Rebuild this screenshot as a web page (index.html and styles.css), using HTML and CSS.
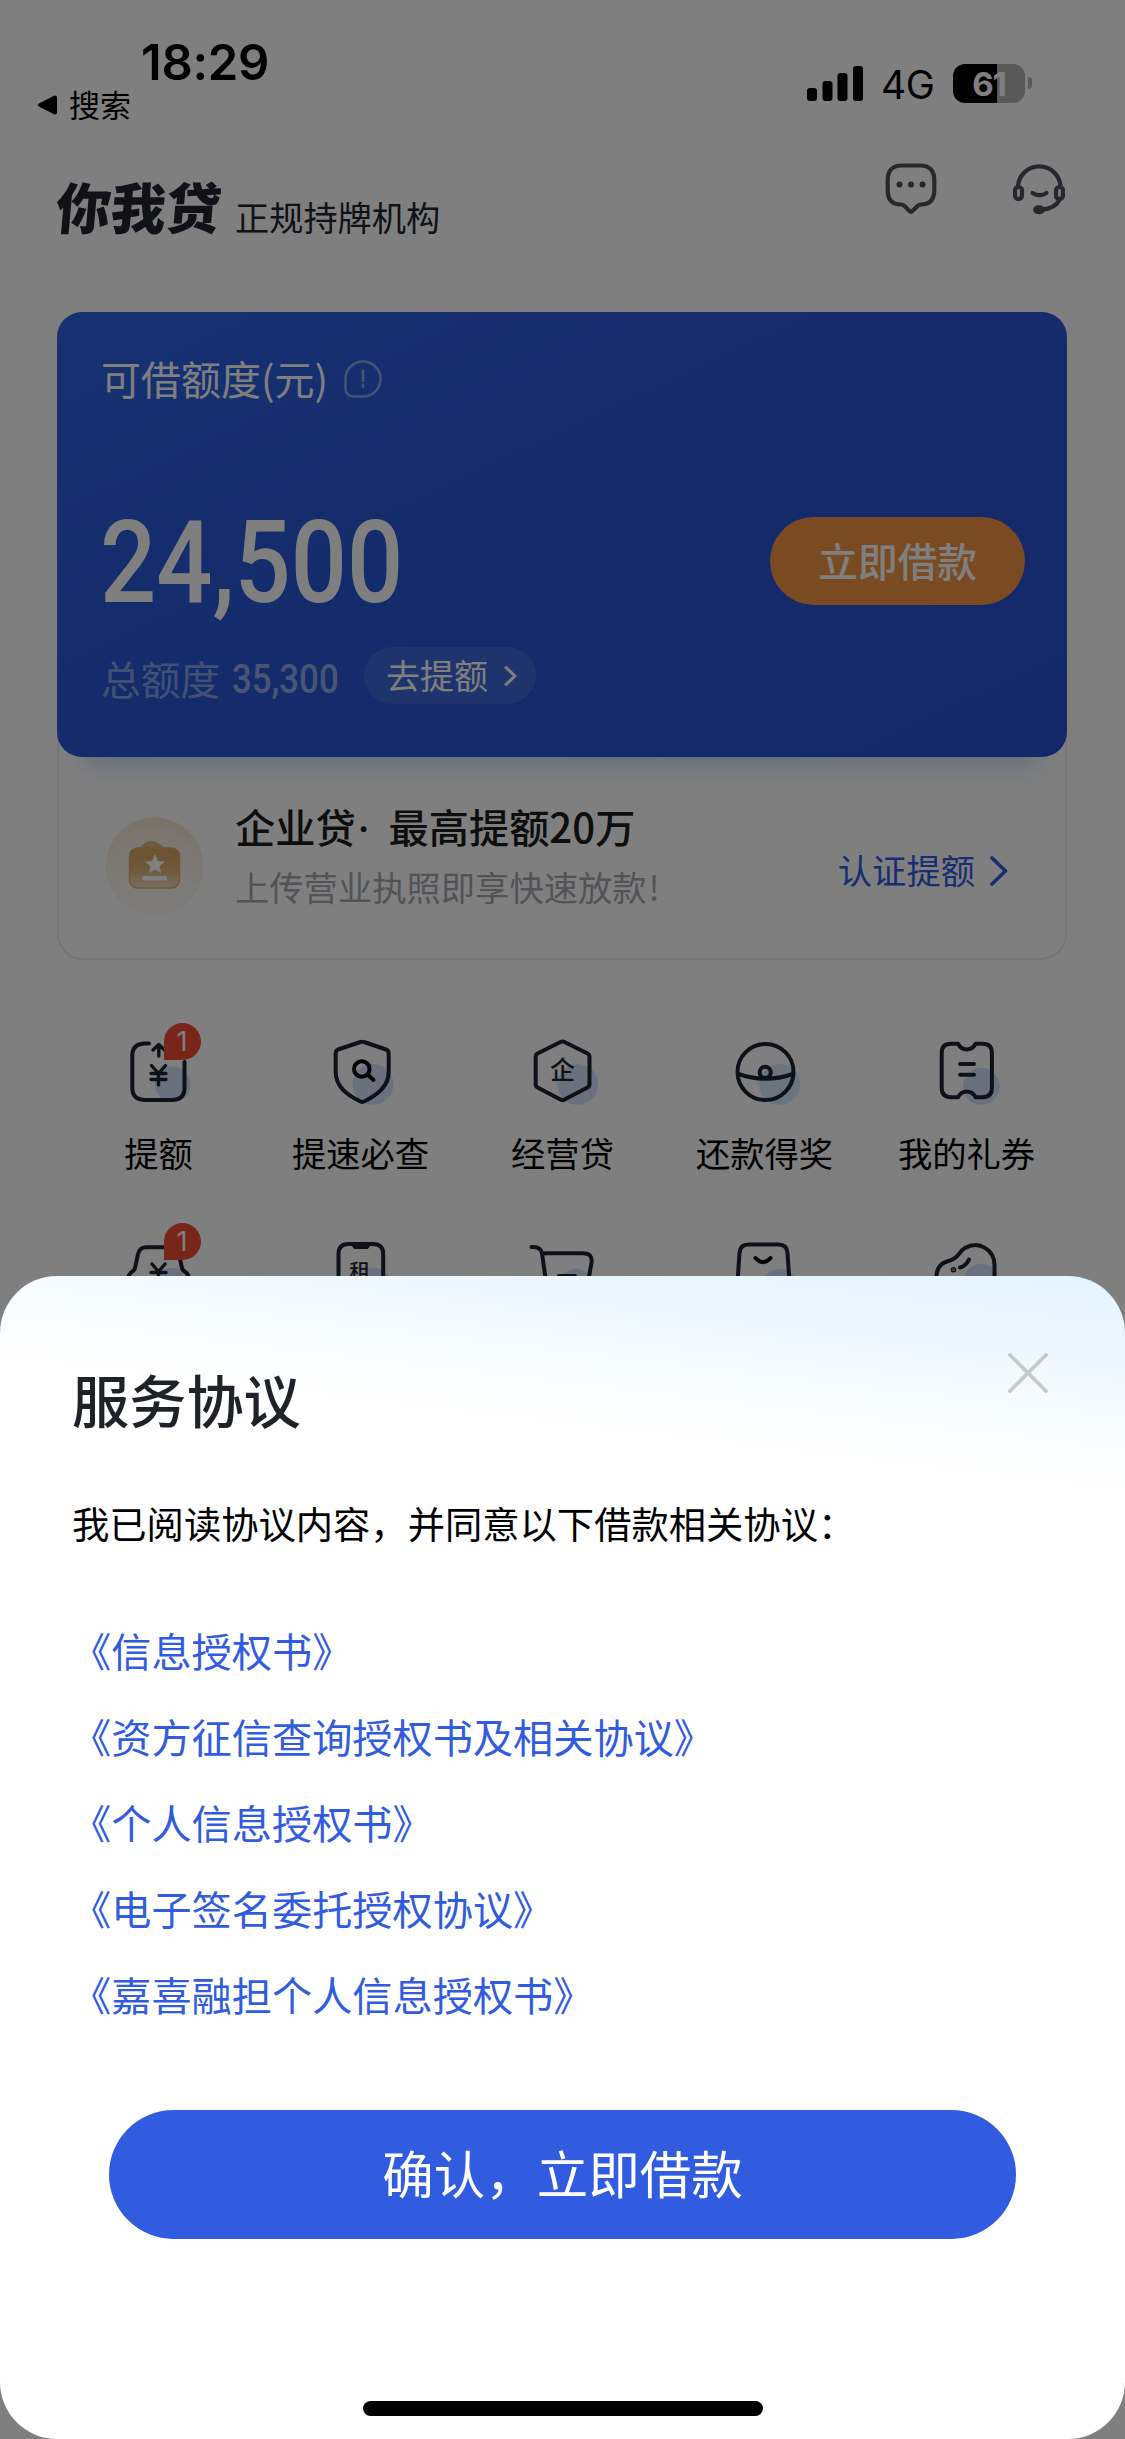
FILE: index.html
```html
<!DOCTYPE html>
<html lang="zh-CN">
<head>
<meta charset="utf-8">
<title>你我贷</title>
<link rel="stylesheet" href="styles.css">
</head>
<body>
<div class="screen">
  <div class="status">
    <div class="status-left">
      <div class="clock">18:29</div>
      <div class="back">
        <svg class="back-arrow" viewBox="0 0 20 20"><path d="M2 8.6 17 .8Q20 0 20 2.500V17.500Q20 20 17 19.200L2 11.400Q-.5 10 2 8.600Z"/></svg>
        <span>搜索</span>
      </div>
    </div>
    <div class="status-right">
      <svg class="signal" viewBox="0 0 56 35"><rect x="0" y="22" width="10" height="13" rx="3"/><rect x="15.500" y="15" width="10" height="20" rx="3"/><rect x="30.500" y="7" width="10" height="28" rx="3"/><rect x="46" y="0" width="10" height="35" rx="3"/></svg>
      <span class="net">4G</span>
      <div class="battery"><span>61</span></div>
      <i class="battery-nub"></i>
    </div>
  </div>

  <header class="header">
    <div class="logo">你我贷</div>
    <div class="slogan">正规持牌机构</div>
    <div class="header-icons">
      <svg class="hicon" viewBox="0 0 52 52"><path d="M17 2.500H35Q49.300 2.500 49.300 17V27Q49.300 41.500 36 41.500Q34 41.500 32.500 43L27.500 48Q26 49.500 24.500 48L19.500 43Q18 41.500 16 41.500Q2.700 41.500 2.700 27V17Q2.700 2.500 17 2.500Z"/><g class="fill"><circle cx="14.500" cy="21.500" r="3"/><circle cx="26" cy="21.500" r="3"/><circle cx="37.500" cy="21.500" r="3"/></g></svg>
      <svg class="hicon" viewBox="0 0 52 52"><path d="M5 23A21.300 21 0 0 1 47.500 23M47 36Q42 46 29 46.500"/><rect x="2" y="24" width="7" height="12" rx="3.500"/><rect x="43" y="24" width="7" height="12" rx="3.500"/><path d="M19.500 30Q26.500 34.500 33.500 30"/><ellipse class="fill" cx="26" cy="46.800" rx="6" ry="4.500"/></svg>
    </div>
  </header>

  <section class="quota">
    <div class="credit">
      <div class="credit-title"><span>可借额度(元)</span>
        <svg class="info" viewBox="0 0 38 38"><path d="M1.500 19A17.500 17.500 0 0 1 19 1.500A17.300 17.500 0 0 1 36.500 19A17.500 17.500 0 0 1 19 36.500H10Q1.500 36.500 1.500 28Z"/><path d="M19 10.500V21M19 24.500V27"/></svg>
      </div>
      <div class="credit-main">
        <div class="amount"><span>24,500</span></div>
        <div class="borrow">立即借款</div>
      </div>
      <div class="credit-foot">
        <span class="total">总额度</span>
        <span class="total-num"><span>35,300</span></span>
        <span class="raise">去提额<svg viewBox="0 0 13 20"><path d="M2 1.500 11 10 2 18.500"/></svg></span>
      </div>
    </div>
    <div class="biz">
      <svg class="biz-icon" viewBox="0 0 100 100">
        <defs>
          <linearGradient id="halo" x1="0" y1="0" x2="0" y2="1"><stop offset="0" stop-color="#eddcc4"/><stop offset="1" stop-color="#fcf9f6"/></linearGradient>
          <linearGradient id="purse" x1="0" y1="0" x2="0" y2="1"><stop offset="0" stop-color="#d9a45c"/><stop offset=".55" stop-color="#deb279"/><stop offset="1" stop-color="#efdcc3"/></linearGradient>
        </defs>
        <circle cx="50.500" cy="50.500" r="49" fill="url(#halo)" opacity=".75"/>
        <circle cx="50.500" cy="52" r="42" fill="#fff" opacity=".18"/>
        <path d="M35 33Q41 25 47 25Q53 25 62 33Z" fill="#deb279"/>
        <rect x="25.500" y="32" width="50" height="40" rx="8" fill="url(#purse)" stroke="#dab077" stroke-width="1.500"/>
        <path d="M51 38 53.900 44.900 61 45.600 55.700 50.300 57.200 57.200 51 53.600 44.800 57.200 46.300 50.300 41 45.600 48.100 44.900Z" fill="#fff"/>
        <rect x="38" y="60" width="25" height="4.500" rx="1.500" fill="#fff"/>
      </svg>
      <div class="biz-text">
        <div class="biz-title">企业贷<span class="dot">·</span>最高提额20万</div>
        <div class="biz-sub">上传营业执照即享快速放款<span>!</span></div>
      </div>
      <div class="biz-link">认证提额<svg viewBox="0 0 18 30"><path d="M2 2 15.500 15 2 28"/></svg></div>
    </div>
  </section>

  <nav class="grid">
    <div class="cell">
      <svg viewBox="0 0 90 90"><circle class="soft" cx="58.800" cy="64.300" r="18"/><path d="M35 23.500H31Q18.300 23.500 18.300 36V67.500Q18.300 80 31 80H58Q70.500 80 70.500 67.500V42"/><path class="thin" d="M44.800 36V25.500M39 30 44.800 24.500 50.500 30"/><path class="thin" d="M37.500 45.500 44.500 53.500 51.500 45.500M44.500 53.500V65M37 53.500H52M37 59.500H52"/></svg>
      <b class="badge">1</b>
      <span>提额</span>
    </div>
    <div class="cell">
      <svg viewBox="0 0 90 90"><circle class="soft" cx="57" cy="64.300" r="20.400"/><path d="M44.500 22Q46.200 21.300 48 22L70 29.500Q72.700 30.500 72.700 33.500V52C72.700 66 62 74.500 48 81.500Q46.200 82.500 44.500 81.500C30 74.500 19.700 66 19.700 52V33.500Q19.700 30.500 22 29.500Z"/><g class="black"><circle cx="45.800" cy="49" r="7.800"/><path d="M51.800 54.800 57.500 60"/></g></svg>
      <span>提速必查</span>
    </div>
    <div class="cell">
      <svg viewBox="0 0 90 90"><circle class="soft" cx="59.800" cy="64.300" r="20.400"/><path d="M42.500 22Q44.500 20.800 46.500 22L69.500 33.500Q71.500 34.500 71.500 37V64Q71.500 66.500 69.500 67.500L46.500 79.500Q44.500 80.700 42.500 79.500L19.500 67.500Q17.700 66.500 17.700 64V37Q17.700 34.500 19.500 33.500Z"/><text x="44.600" y="58.800" class="zh">企</text></svg>
      <span>经营贷</span>
    </div>
    <div class="cell">
      <svg viewBox="0 0 90 90"><circle class="soft sky" cx="59.800" cy="64.300" r="20.400"/><circle cx="45.500" cy="52" r="28"/><circle cx="45.200" cy="52.300" r="5.600"/><path d="M18.500 54Q45.500 63.500 72.800 54"/></svg>
      <span>还款得奖</span>
    </div>
    <div class="cell">
      <svg viewBox="0 0 90 90"><circle class="soft" cx="59.200" cy="66.300" r="18.500"/><path d="M29 23.800H36Q39 29.500 44.800 29.500T53.600 23.800H60.500Q69.900 23.800 69.900 33V68Q69.900 77.200 60.500 77.200H53.600Q50.500 71.500 44.800 71.500T36 77.200H29Q19.700 77.200 19.700 68V33Q19.700 23.800 29 23.800Z"/><path d="M38 44H52M38 54.700H52"/></svg>
      <span>我的礼券</span>
    </div>
    <div class="cell">
      <svg viewBox="0 0 90 90"><circle class="soft" cx="58.800" cy="66" r="18"/><path d="M13 60Q15.500 53 19 51Q21 49.500 21.500 46L24 34Q26 27.300 32 27.300H57Q63 27.300 65 34L67.500 46Q68 49.500 70 51Q74 53 76 60"/><path class="thin" d="M38 44 44.500 51.500 51 44M44.500 51.500V64M37 52.500H52"/></svg>
      <b class="badge">1</b>
    </div>
    <div class="cell">
      <svg viewBox="0 0 90 90"><circle class="soft" cx="58" cy="66" r="18"/><path d="M22.500 70V34Q22.500 24 32.500 24H57Q67.200 24 67.200 34V70"/><path class="fill" d="M37 24H53L51 27H39Z"/><text x="43.700" y="58.800" class="zh zh-sm">租</text></svg>
    </div>
    <div class="cell">
      <svg viewBox="0 0 90 90"><circle class="soft" cx="58" cy="67" r="18"/><path d="M13.500 27H15Q23 27 24 33.300L28.500 65M24 33.300H65Q75 33.300 73.500 43L70 62M41 56H57"/></svg>
    </div>
    <div class="cell">
      <svg viewBox="0 0 90 90"><circle class="soft" cx="60" cy="67" r="18"/><path d="M17.500 62 19.500 33Q20 24.500 28.500 24.500H58.500Q67 24.500 67.500 33L69.500 62"/><path class="black" d="M35.500 38Q43 46.500 50.500 38"/></svg>
    </div>
    <div class="cell">
      <svg viewBox="0 0 90 90"><circle class="soft" cx="59" cy="62.500" r="18.500"/><path d="M14.500 62Q13 45 25 41.500C38 38 36 32 43 28C57 20 72.500 30 72.500 45V60"/><path d="M38 47.500Q44 46 47 39.500"/><circle class="fill" cx="31.500" cy="49.700" r=".8"/></svg>
    </div>
  </nav>

  <div class="mask"></div>

  <div class="sheet">
    <div class="sheet-head">
      <h1>服务协议</h1>
      <svg class="close" viewBox="0 0 40 40"><path d="M2 2 38 38M38 2 2 38"/></svg>
    </div>
    <p class="lead">我已阅读协议内容，并同意以下借款相关协议：</p>
    <ul class="docs">
      <li>《信息授权书》</li>
      <li>《资方征信查询授权书及相关协议》</li>
      <li>《个人信息授权书》</li>
      <li>《电子签名委托授权协议》</li>
      <li>《嘉喜融担个人信息授权书》</li>
    </ul>
    <div class="confirm">确认，立即借款</div>
    <div class="home-bar"></div>
  </div>
</div>
</body>
</html>
```
FILE: styles.css
```css
* { box-sizing: border-box; }
body { margin: 0; background: #fff; font-family: "Noto Sans CJK SC", "Noto Sans", sans-serif; color: #000; }
svg { display: block; fill: none; stroke-linecap: round; stroke-linejoin: round; }
.screen { position: relative; width: 1125px; height: 2439px; overflow: hidden; background: #fff; white-space: nowrap; }
.mask { position: absolute; inset: 0; background: rgba(0, 0, 0, .5); }

/* status bar */
.status { display: flex; justify-content: space-between; height: 150px; padding: 32px 93px 0 37px; }
.clock { margin-left: 104px; height: 60px; line-height: 61px; font-family: Inter, sans-serif; font-weight: 600; font-size: 49px; letter-spacing: -.3px; }
.back { display: flex; align-items: center; gap: 12px; height: 26px; line-height: 26px; font-size: 31px; }
.back span { margin-top: -3px; }
.back-arrow { width: 20px; height: 20px; fill: #000; }
.status-right { display: flex; align-items: center; height: 40px; margin-top: 31px; }
.signal { width: 56px; height: 35px; fill: #000; }
.net { width: 53px; margin: 4px 19px 0 18px; font: 400 39px/40px Inter, sans-serif; letter-spacing: -.5px; }
.battery { width: 72px; height: 39px; border-radius: 12px; background: linear-gradient(90deg, #000 44px, #b2b2b2 44px); color: #fff; text-align: center; font: 700 33px/40px Inter, sans-serif; letter-spacing: -1px; }
.battery-nub { width: 4px; height: 12px; margin-left: 3px; border-radius: 0 6px 6px 0; background: #b2b2b2; }

/* brand row */
.header { display: flex; align-items: flex-start; height: 162px; padding: 13px 60px 0 56px; color: #20242e; }
.logo { width: 164px; height: 50px; margin-top: 20px; line-height: 44px; font-size: 55px; font-weight: 900; transform: skewX(-5deg); }
.slogan { margin: 36px auto 0 15px; line-height: 34px; font-size: 34.200px; }
.header-icons { display: flex; gap: 76px; }
.hicon { width: 52px; height: 52px; stroke: #4c505a; stroke-width: 4.200; }
.hicon .fill { fill: #4c505a; stroke: none; }

/* credit card */
.quota { width: 1010px; height: 648px; margin: 0 0 0 57px; border: 2px solid #e3ebf8; border-top: 0; border-radius: 26px; }
.credit { width: 1010px; height: 445px; margin-left: -2px; padding: 45px 42px 0 44px; border-radius: 25px; background: linear-gradient(155deg, #2e62e4 0%, #2a58d8 45%, #2850d2 100%); box-shadow: 0 38px 22px -30px rgba(110, 155, 230, .4); color: #fff; }
.credit-title { display: flex; align-items: center; gap: 16px; height: 44px; line-height: 44px; font-size: 40px; }
.credit-title span { margin-top: -2px; }
.info { width: 38px; height: 38px; stroke: rgba(255, 255, 255, .45); stroke-width: 2.600; }
.credit-main { display: flex; justify-content: space-between; margin-top: 105px; height: 110px; }
.amount { width: 300px; height: 110px; line-height: 113px; font-family: Roboto, sans-serif; font-weight: 500; font-size: 115px; }
.amount span { display: inline-block; margin-left: -1px; transform: scaleX(.86); transform-origin: 0 50%; }
.borrow { width: 255px; height: 88px; margin-top: 11px; border-radius: 44px; background: #f49444; text-align: center; line-height: 86px; font-size: 39.800px; font-weight: 500; }
.credit-foot { display: flex; align-items: center; height: 57px; margin-top: 31px; }
.total { margin-top: 4px; line-height: 44px; font-size: 39.700px; color: rgba(255, 255, 255, .45); }
.total-num { width: 120px; margin: 8px 0 0 12px; color: rgba(255, 255, 255, .5); font: 500 40px/44px Roboto, sans-serif; }
.total-num span { display: inline-block; transform: scaleX(.87); transform-origin: 0 50%; }
.raise { display: flex; align-items: center; gap: 16px; width: 172px; height: 57px; margin-left: 12px; padding: 0 0 3px 22px; border-radius: 29px; background: rgba(255, 255, 255, .1); font-size: 34px; }
.raise svg { width: 13px; height: 20px; margin-top: 3px; stroke: #fff; stroke-width: 3; }

.biz { display: flex; align-items: flex-start; padding: 59px 57px 0 45px; }
.biz-icon { width: 100px; height: 100px; }
.biz-text { margin: -20px auto 0 31px; }
.biz-title { height: 60px; line-height: 60px; font-size: 40.200px; font-weight: 500; color: #1c1c1e; }
.dot { display: inline-block; width: 33px; padding-left: 2px; font-family: Inter, sans-serif; line-height: 1; }
.biz-sub { height: 60px; line-height: 60px; font-size: 34.300px; color: #a4a6ae; }
.biz-sub span { margin-left: 2px; }
.biz-link { display: flex; align-items: center; gap: 15px; margin-top: 25px; height: 56px; font-size: 34.300px; color: #315ce0; }
.biz-link svg { width: 18px; height: 30px; margin-top: 3px; stroke: #315ce0; stroke-width: 3.600; }

/* shortcuts */
.grid { display: grid; grid-template-columns: repeat(5, 202px); grid-auto-rows: 200px; width: 1010px; margin: 60px auto 0; }
.cell { position: relative; display: flex; flex-direction: column; align-items: center; }
.cell svg { width: 90px; height: 90px; stroke: #1d2430; stroke-width: 4; }
.cell span { margin-top: 17px; line-height: 50px; font-size: 34.300px; }
.cell .soft { fill: #d4e0fb; stroke: none; }
.cell .sky { fill: #d2e9fb; }
.cell .black { stroke: #000; }
.cell .thin { stroke-width: 3.400; }
.cell .fill { fill: #1d2430; }
.cell text { fill: #1d2430; stroke: none; text-anchor: middle; }
.zh { font-size: 25px; font-weight: 500; }
.zh-sm { font-size: 21px; }
.badge { position: absolute; left: 106px; top: 3px; width: 37px; height: 37px; border-radius: 50% 50% 50% 0; background: #f04a34; color: #fff; text-align: center; font: 400 27px/37px Inter, sans-serif; }

/* agreement sheet */
.sheet { position: absolute; left: 0; right: 0; top: 1276px; bottom: 0; display: flex; flex-direction: column; border-radius: 57px; background: linear-gradient(186.800deg, #e3f4fe 0, #ebf5fe 55px, #f5fbff 133px, #fff 215px) 0 0 / 100% 340px no-repeat #fff; }
.sheet-head { display: flex; justify-content: space-between; padding: 77px 77px 0 72px; }
h1 { margin: 13px 0 0; line-height: 64px; font-size: 57.200px; font-weight: 500; color: #1f2228; }
.close { width: 40px; height: 40px; stroke: #c6cacf; stroke-width: 3.800; }
.lead { margin: 63px 0 0 72px; line-height: 60px; font-size: 37.300px; }
.docs { margin: 54px 0 0 71px; padding: 0; list-style: none; font-size: 40.200px; line-height: 86px; color: #315ce0; }
.confirm { margin: 73px 109px 0; height: 129px; border-radius: 65px; background: #315ce0; color: #fff; text-align: center; line-height: 123px; font-size: 51.500px; }
.home-bar { width: 400px; height: 15px; margin: 162px auto 0; border-radius: 8px; background: #000; }
```
